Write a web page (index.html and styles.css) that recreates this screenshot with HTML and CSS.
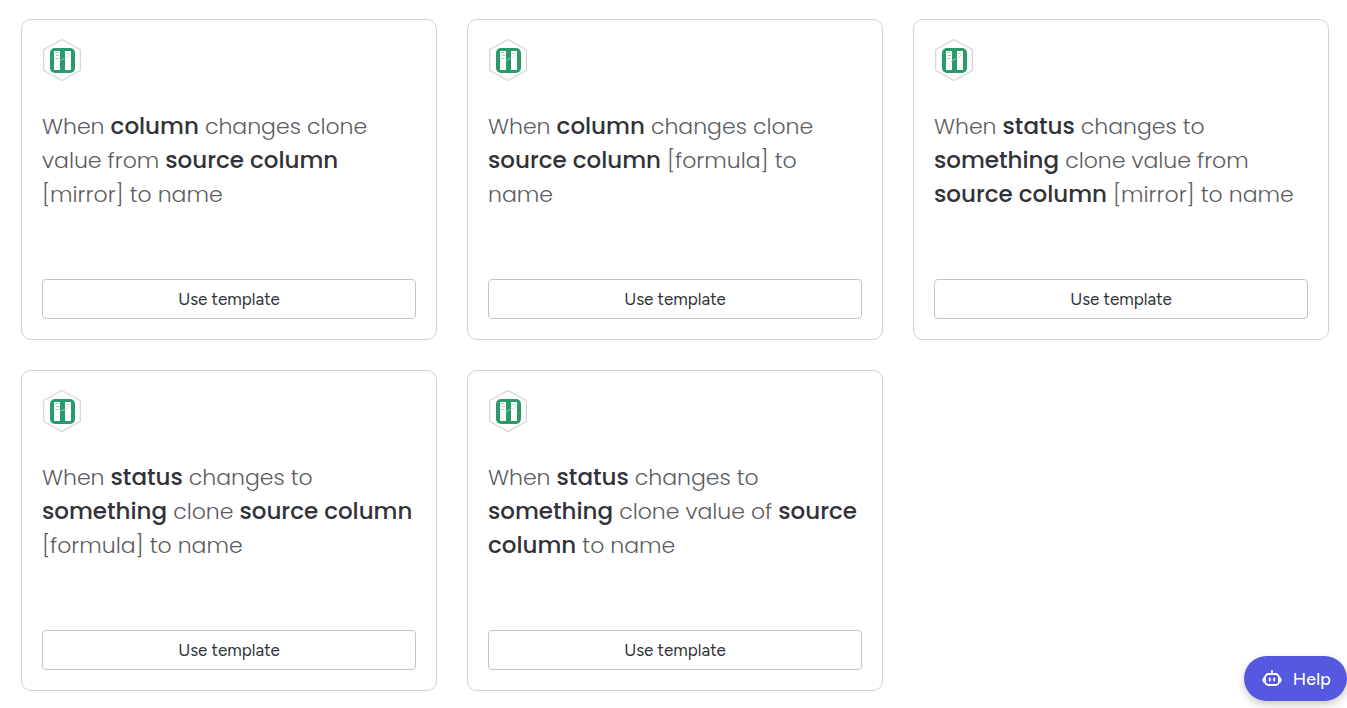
FILE: index.html
```html
<!DOCTYPE html>
<html lang="en">
<head>
    <meta charset="UTF-8">
    <meta name="viewport" content="width=device-width, initial-scale=1.0">
    <title>Templates</title>
    <link rel="stylesheet" href="styles.css">
</head>
<body>
    <svg class="sprite" aria-hidden="true">
        <symbol id="app-icon" viewBox="0 0 40 44">
            <path d="M20 1.500 L38.300 11.500 V32.500 L20 42.500 L1.700 32.500 V11.500 Z" fill="#fff" stroke="#d3d3d8" stroke-width="1.200"/>
            <rect x="8" y="10" width="25" height="25" rx="5" fill="#289b69"/>
            <rect x="12" y="13" width="6" height="19" fill="#fff"/>
            <rect x="23" y="13" width="6" height="19" fill="#fff"/>
            <path d="M13 14.500h3.500M14 17.500h3M13 20.500h3.500M24.500 15.500h2" stroke="#9fd0ba" stroke-width="1"/>
            <path d="M17 23.500l4-2.500 3-1 4-3.500" fill="none" stroke="#a9d6c1" stroke-width="0.800"/>
        </symbol>
    </svg>

    <main class="templates">
        <article class="card">
            <svg class="card-icon" aria-hidden="true"><use href="#app-icon"/></svg>
            <p class="card-text">When <strong>column</strong> changes clone value from <strong>source column</strong> [mirror] to name</p>
            <button class="use-btn" type="button">Use template</button>
        </article>
        <article class="card">
            <svg class="card-icon" aria-hidden="true"><use href="#app-icon"/></svg>
            <p class="card-text">When <strong>column</strong> changes clone <strong>source column</strong> [formula] to name</p>
            <button class="use-btn" type="button">Use template</button>
        </article>
        <article class="card">
            <svg class="card-icon" aria-hidden="true"><use href="#app-icon"/></svg>
            <p class="card-text">When <strong>status</strong> changes to <strong>something</strong> clone value from <strong>source column</strong> [mirror] to name</p>
            <button class="use-btn" type="button">Use template</button>
        </article>
        <article class="card">
            <svg class="card-icon" aria-hidden="true"><use href="#app-icon"/></svg>
            <p class="card-text">When <strong>status</strong> changes to <strong>something</strong> clone <strong>source column</strong> [formula] to name</p>
            <button class="use-btn" type="button">Use template</button>
        </article>
        <article class="card">
            <svg class="card-icon" aria-hidden="true"><use href="#app-icon"/></svg>
            <p class="card-text">When <strong>status</strong> changes to <strong>something</strong> clone value of <strong>source column</strong> to name</p>
            <button class="use-btn" type="button">Use template</button>
        </article>
    </main>

    <button class="help-btn" type="button">
        <svg class="help-icon" viewBox="0 0 20 20" fill="none" stroke="#fff" stroke-width="1.800" stroke-linecap="round" aria-hidden="true">
            <rect x="3" y="5" width="14" height="11" rx="3.500"/>
            <path d="M10 2v3M1.500 9.500v3M18.500 9.500v3M7.800 9.500v2M12.200 9.500v2"/>
        </svg>
        Help
    </button>
</body>
</html>
```

FILE: styles.css
```css
body {
    margin: 0;
    padding: 19px 18px 17px 21px;
    background-color: #fff;
    color: #323338;
    font-family: Figtree, Inter, sans-serif;
}
.sprite {
    display: none;
}
.templates {
    display: grid;
    grid-template-columns: repeat(3, 1fr);
    gap: 30px;
}
.card {
    display: flex;
    flex-direction: column;
    box-sizing: border-box;
    min-height: 321px;
    padding: 18px 20px 20px;
    border: 1px solid #d0d1d8;
    border-radius: 10px;
}
.card-icon {
    width: 40px;
    height: 44px;
}
.card-text {
    margin: 28px 0;
    color: #5c5d61;
    font-family: Poppins, Inter, sans-serif;
    font-size: 22px;
    font-weight: 300;
    line-height: 34px;
}
.card-text strong {
    color: #323338;
    font-size: 23px;
    font-weight: 500;
    line-height: 1;
}
.use-btn {
    height: 40px;
    margin-top: auto;
    border: 1px solid #c3c4cb;
    border-radius: 4px;
    background-color: #fff;
    color: #323338;
    font-family: inherit;
    font-size: 17px;
    cursor: pointer;
}
.use-btn:hover {
    background-color: #f5f6f8;
}
.help-btn {
    position: fixed;
    right: 0;
    bottom: 7px;
    display: flex;
    align-items: center;
    gap: 11px;
    height: 45px;
    padding: 0 16px 0 18px;
    border: none;
    border-radius: 23px;
    background-color: #5559df;
    box-shadow: 0 4px 8px rgba(0, 0, 0, 0.2);
    color: #fff;
    font-family: inherit;
    font-size: 18px;
    font-weight: 500;
    cursor: pointer;
}
.help-icon {
    width: 20px;
    height: 20px;
}
@media (max-width: 1000px) {
    .templates {
        grid-template-columns: repeat(2, 1fr);
    }
}
@media (max-width: 640px) {
    .templates {
        grid-template-columns: 1fr;
    }
}
```
